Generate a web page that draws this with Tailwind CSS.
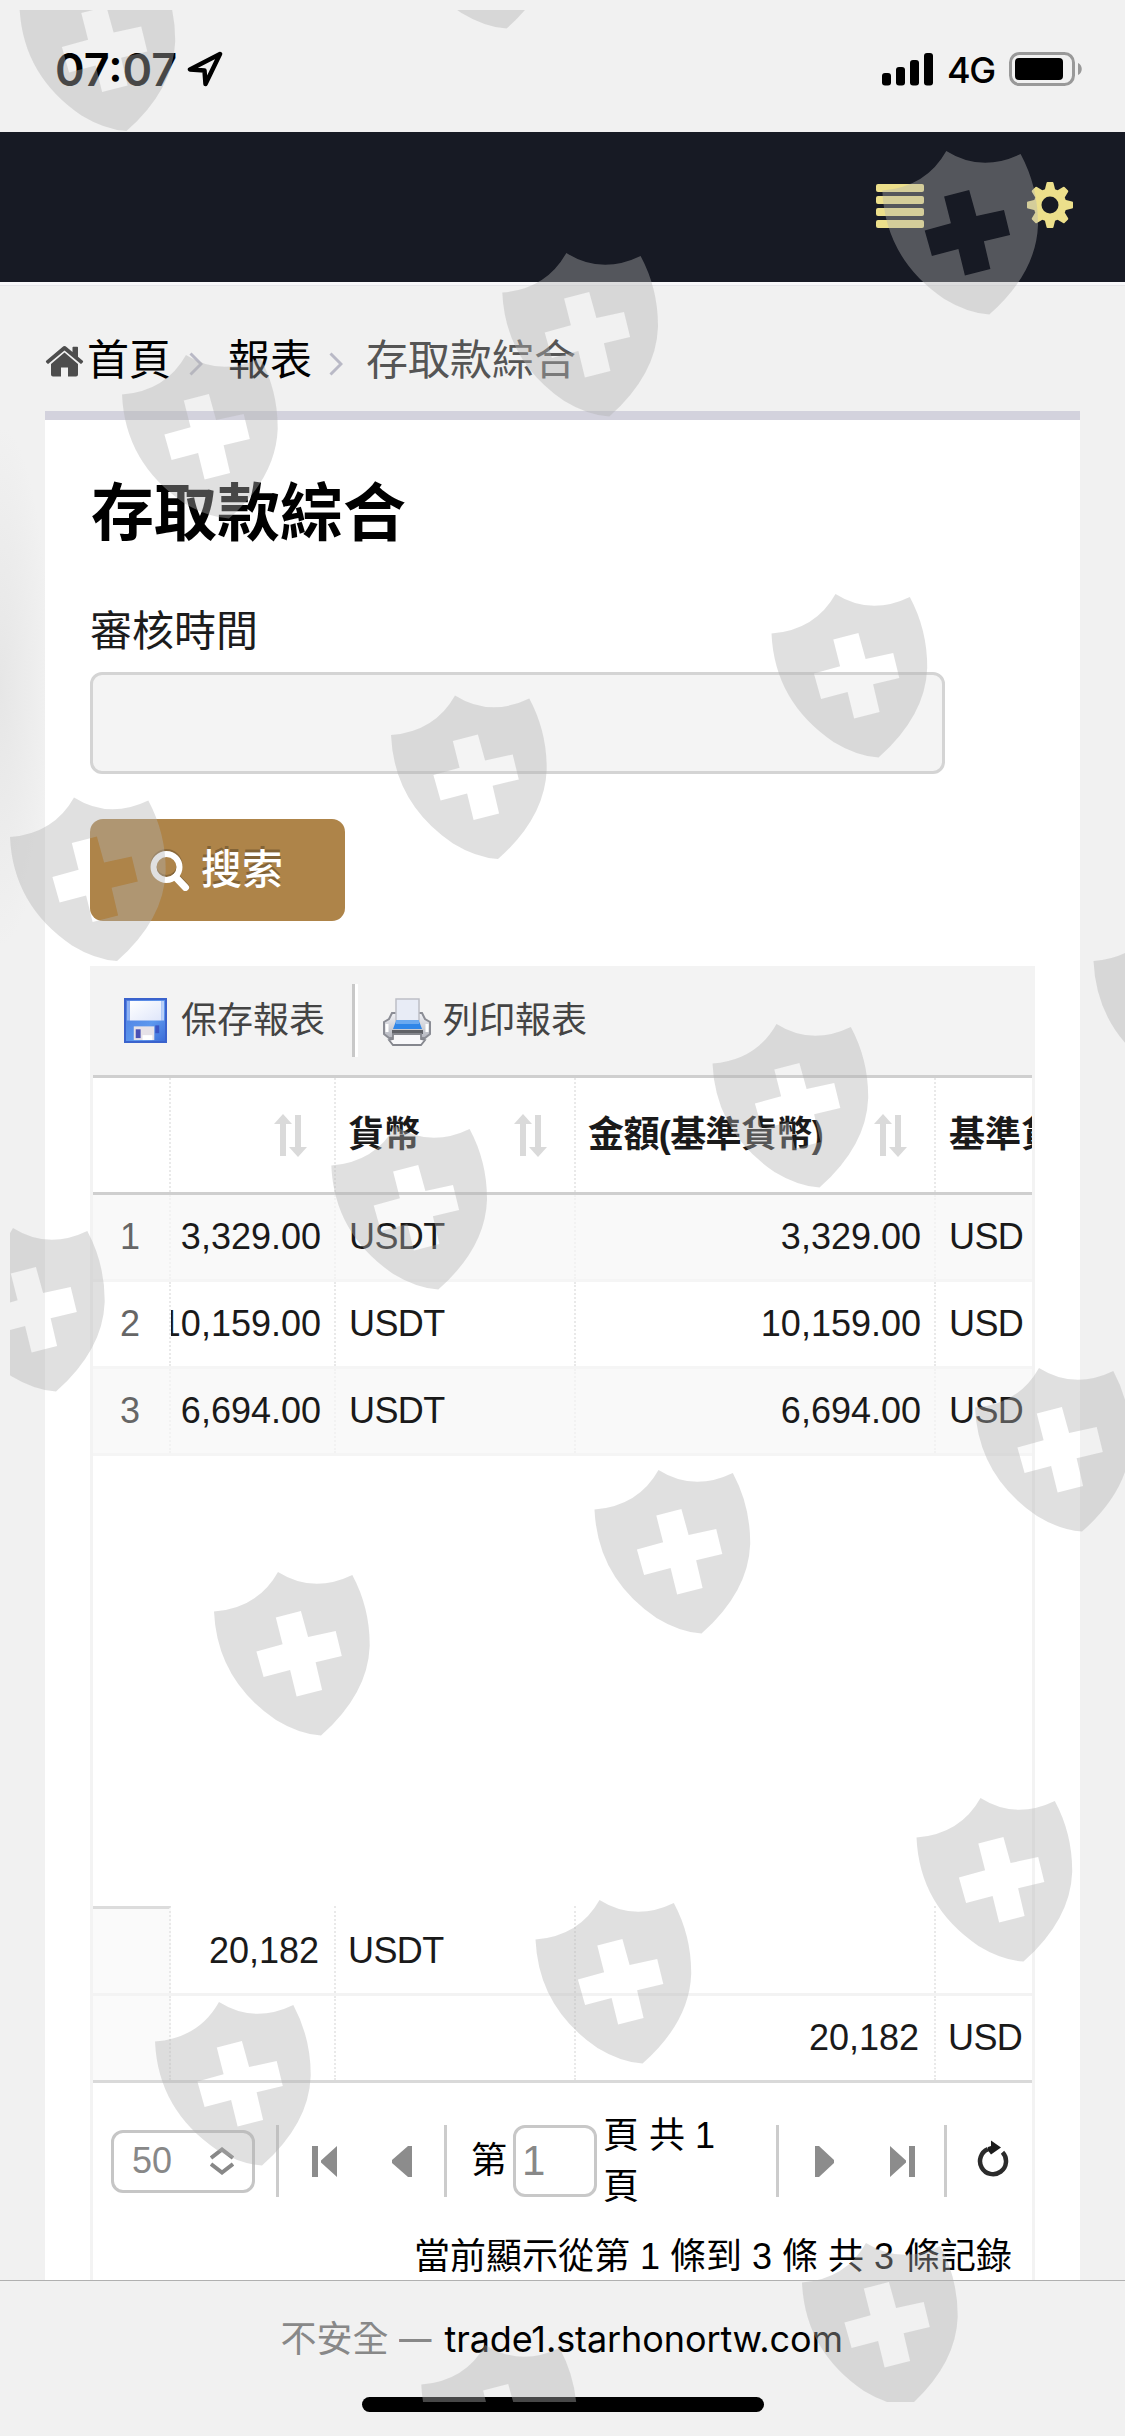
<!DOCTYPE html>
<html lang="zh-Hant">
<head>
<meta charset="utf-8">
<title>存取款綜合</title>
<script src="https://cdn.jsdelivr.net/npm/@tailwindcss/browser@4"></script>
</head>
<body class="relative flex h-[2436px] w-[1125px] flex-col overflow-hidden bg-[#f1f1f1] font-['Liberation_Sans','Noto_Sans_CJK_TC',sans-serif] text-black">

<!-- status bar -->
<header class="flex h-[132px] shrink-0 items-center justify-between pt-[6px] pr-[43px] pl-[55px]">
  <div class="flex items-center gap-3">
    <span class="w-[120px] font-['Inter',sans-serif] text-[45px] leading-none font-semibold whitespace-nowrap">07:07</span>
    <svg class="h-[36px] w-[36px]" viewBox="0 0 36 36" fill="none" stroke="#000" stroke-width="4.500" stroke-linejoin="round"><path d="M33 3 L3 18.500 L17.500 19.500 L18.500 33 Z"/></svg>
  </div>
  <div class="flex items-center gap-[13px]">
    <svg class="h-[33px] w-[52px]" viewBox="0 0 52 33"><rect x="0" y="20" width="9" height="12.500" rx="3"/><rect x="14" y="14" width="9" height="18.500" rx="3"/><rect x="28" y="7" width="9" height="25.500" rx="3"/><rect x="42" y="0" width="9" height="32.500" rx="3"/></svg>
    <span class="w-[49px] pt-[2px] font-['Inter',sans-serif] text-[36px] leading-none font-medium tracking-[-1.500px]">4G</span>
    <svg class="h-[34px] w-[73px]" viewBox="0 0 73 34"><rect x="1.500" y="1.500" width="63" height="31" rx="9" fill="none" stroke="#999" stroke-width="3"/><rect x="6" y="6" width="48" height="22" rx="4"/><path d="M69 11c5 2 5 10 0 12z" fill="#999"/></svg>
  </div>
</header>

<!-- site header -->
<nav class="flex h-[150px] shrink-0 items-center justify-end gap-[103px] bg-[#171a24] pr-[52px] pb-[4px]">
  <svg class="mt-[2px] h-[44px] w-[48px]" viewBox="0 0 48 44" fill="#ecdf8b"><rect width="48" height="8" rx="2"/><rect y="12" width="48" height="8" rx="2"/><rect y="24" width="48" height="8" rx="2"/><rect y="36" width="48" height="8" rx="2"/></svg>
  <svg class="h-[46px] w-[46px]" viewBox="-23 -23 46 46"><g fill="#ecdf8b"><circle r="16.500"/><g id="teeth"><path id="tooth" d="M-5.500 -14 L-3.500 -22 Q-3.300 -23 -2.500 -23 L2.500 -23 Q3.300 -23 3.500 -22 L5.500 -14 Z"/><use href="#tooth" transform="rotate(45)"/><use href="#tooth" transform="rotate(90)"/><use href="#tooth" transform="rotate(135)"/></g><use href="#teeth" transform="rotate(180)"/></g><circle r="8.500" fill="#171a24"/></svg>
</nav>
<div class="h-1 shrink-0 border-b border-[#e6e6ea] bg-[#f8f8fa]"></div>

<main class="flex h-[1994px] shrink-0 flex-col overflow-hidden bg-[radial-gradient(ellipse_50px_260px_at_0px_400px,#e6e6e6,#f1f1f1)] px-[45px]">
  <!-- breadcrumb -->
  <div class="flex h-[125px] shrink-0 items-center pt-[25px] text-[42px] leading-none">
    <svg class="mr-[3px] h-[31px] w-[39px]" viewBox="0 0 39 31" fill="#4d4d4d"><path d="M19.500 6.500 L33 18 V28.500 Q33 30.500 31 30.500 H23 V21.500 H16 V30.500 H8 Q6 30.500 6 28.500 V18 Z"/><path d="M19.500 0 Q20.500 0 21.500 1 L27.500 6 V1.500 Q27.500 .8 28.200 .8 H32.300 Q33 .8 33 1.500 V10.700 L37.800 14.800 Q38.500 15.400 37.900 16.200 L36.700 17.500 Q36 18.200 35.300 17.600 L19.500 4.400 L3.700 17.600 Q3 18.200 2.300 17.500 L1.100 16.200 Q.5 15.400 1.200 14.800 L17.500 1 Q18.500 0 19.500 0Z"/></svg>
    <span class="w-[102px]">首頁</span>
    <svg class="mt-[5px] h-[24px] w-[14px]" viewBox="0 0 14 24" fill="none" stroke="#b9b9c6" stroke-width="3"><path d="M1.500 1.500 L12 12 L1.500 22.500"/></svg>
    <span class="ml-[25px] w-[101px]">報表</span>
    <svg class="mt-[5px] h-[24px] w-[14px]" viewBox="0 0 14 24" fill="none" stroke="#b9b9c6" stroke-width="3"><path d="M1.500 1.500 L12 12 L1.500 22.500"/></svg>
    <span class="ml-[23px] text-[#555]">存取款綜合</span>
  </div>

  <section class="flex shrink-0 flex-col border-t-[9px] border-[#d3d2dd] bg-white px-[45px]">
    <h1 class="mt-[61px] pl-px text-[63px] leading-[64px] font-bold">存取款綜合</h1>
    <label class="mt-[66px] h-[42px] text-[42px] leading-[42px] text-[#1c1c1c]">審核時間</label>
    <div class="mt-[19px] h-[102px] w-[855px] rounded-[12px] border-[3px] border-[#d4d4d4] bg-[#f4f4f4]"></div>
    <button class="mt-[45px] flex h-[102px] w-[255px] items-center rounded-[13px] bg-[#ae8449] pl-[60px] text-[41px] leading-none font-medium text-white [text-shadow:0_-3px_0_rgba(0,0,0,0.25)]">
      <svg class="mr-[11px] h-[42px] w-[40px]" viewBox="0 0 40 42" fill="none" stroke-width="6"><g stroke="#000" stroke-opacity=".2" transform="translate(0 -2)"><circle cx="16.500" cy="18" r="13"/><path d="M25.500 28 L36 39" stroke-linecap="round"/></g><g stroke="#fff"><circle cx="16.500" cy="18" r="13"/><path d="M25.500 28 L35.500 38.500" stroke-linecap="round" stroke-width="7"/></g></svg>
      <span>搜索</span>
    </button>

    <!-- report grid -->
    <div class="mt-[45px] w-[945px] border-x-[3px] border-[#f3f3f3] text-[36px] leading-none text-[#1a1a1a]">
      <div class="flex h-[112px] items-center border-b-[3px] border-[#cfcfcf] bg-[#f3f3f3] pl-[31px] text-[#444]">
        <svg class="h-[45px] w-[43px]" viewBox="0 0 44 46">
          <defs><linearGradient id="fd" x1="0" y1="0" x2="1" y2="1"><stop offset="0" stop-color="#4b78dd"/><stop offset=".6" stop-color="#5c98ee"/><stop offset="1" stop-color="#3867d4"/></linearGradient><linearGradient id="fl" x1="0" y1="0" x2="1" y2="1"><stop offset="0" stop-color="#fff"/><stop offset="1" stop-color="#dfe6fa"/></linearGradient></defs>
          <rect width="44" height="46" fill="url(#fd)"/><rect x="1" y="1" width="42" height="44" fill="none" stroke="#3a62cc" stroke-width="2"/><rect x="6" y="3" width="32" height="20" fill="url(#fl)"/><rect x="38" y="3" width="3" height="20" fill="#b9d0f8"/><rect x="3" y="3" width="3" height="20" fill="#8fb2f3"/><rect x="10" y="29" width="21" height="14" fill="#e6e2e8"/><rect x="12" y="32" width="5" height="9" fill="#4a50b4"/><rect x="32" y="28" width="4" height="8" fill="#3a55c4"/><rect x="19" y="38" width="10" height="5" fill="#fff"/>
        </svg>
        <span class="ml-[14px] w-[171px]">保存報表</span>
        <i class="h-[73px] w-[6px] border-x-[3px] border-l-[#c8c8c8] border-r-white"></i>
        <svg class="mt-[2px] ml-[25px] h-[48px] w-[48px]" viewBox="0 0 48 48">
          <defs><linearGradient id="pb" x1="0" y1="0" x2="0" y2="1"><stop offset="0" stop-color="#f2f3f7"/><stop offset="1" stop-color="#b4b6be"/></linearGradient></defs>
          <path d="M9 15 H39 L42 21 L47 24 V36 L42 40 H6 L1 36 V24 L6 21 Z" fill="url(#pb)" stroke="#8b8d95" stroke-width="2"/>
          <path d="M13 1 H36 V23 H13 Z" fill="#e8ecf6" stroke="#bdbfc6" stroke-width="1.500"/><path d="M13 23 H36 L39 31 H10 Z" fill="#2f86e8"/><path d="M13 22 H36 V26 H13Z" fill="#6aa9f0"/>
          <path d="M4 26v8M44 26v8" stroke="#fff" stroke-width="3"/>
          <rect x="9" y="32" width="31" height="4" fill="#606268"/><path d="M10 36 H38 V41 L42 42 L38 47 H10 L6 42 L10 41 Z" fill="#f8f8fa" stroke="#85878e" stroke-width="1.800"/>
        </svg>
        <span class="ml-[12px]">列印報表</span>
      </div>

      <!-- column titles -->
      <div class="grid h-[117px] grid-cols-[78px_165px_240px_360px_96px] overflow-hidden border-b-[3px] border-[#cfcfcf] font-bold">
        <div class="border-r-[2px] border-dotted border-[#e9e9e9]"></div>
        <div class="flex items-center justify-end border-r-[2px] border-dotted border-[#e9e9e9] pr-[27px]">
          <svg class="h-[43px] w-[33px]" viewBox="0 0 33 43" fill="#dadada"><path id="sort" d="M0 10 L9 0 L18 10 H12 V42 H6 V10Z M21 1 H27 V33 H33 L24 43 L15 33 H21Z"/></svg>
        </div>
        <div class="flex items-center justify-between border-r-[2px] border-dotted border-[#e9e9e9] pr-[27px] pl-[12px]">
          <span>貨幣</span><svg class="h-[43px] w-[33px]" viewBox="0 0 33 43" fill="#dadada"><use href="#sort"/></svg>
        </div>
        <div class="flex items-center justify-between border-r-[2px] border-dotted border-[#e9e9e9] pr-[27px] pl-[12px]">
          <span class="tracking-[-0.600px] whitespace-nowrap">金額(基準貨幣)</span><svg class="h-[43px] w-[33px]" viewBox="0 0 33 43" fill="#dadada"><use href="#sort"/></svg>
        </div>
        <div class="flex items-center overflow-hidden pl-[13px] whitespace-nowrap">基準貨幣</div>
      </div>

      <!-- data rows -->
      <div class="h-[711px]">
        <div class="grid h-[87px] grid-cols-[78px_165px_240px_360px_96px] border-b-[3px] border-[#f5f5f5] bg-[#f9f9f9] leading-[84px]">
          <div class="border-r-[2px] border-dotted border-[#f2f2f2] pr-[2px] text-center text-[#666]">1</div>
          <div class="flex justify-end overflow-hidden border-r-[2px] border-dotted border-[#f2f2f2] pr-[13px]">3,329.00</div>
          <div class="border-r-[2px] border-dotted border-[#f2f2f2] pl-[13px] tracking-[-0.600px]">USDT</div>
          <div class="border-r-[2px] border-dotted border-[#f2f2f2] pr-[13px] text-right">3,329.00</div>
          <div class="pl-[13px] tracking-[-0.600px]">USD</div>
        </div>
        <div class="grid h-[87px] grid-cols-[78px_165px_240px_360px_96px] border-b-[3px] border-[#f5f5f5] leading-[84px]">
          <div class="border-r-[2px] border-dotted border-[#e9e9e9] pr-[2px] text-center text-[#666]">2</div>
          <div class="flex justify-end overflow-hidden border-r-[2px] border-dotted border-[#e9e9e9] pr-[13px]">10,159.00</div>
          <div class="border-r-[2px] border-dotted border-[#e9e9e9] pl-[13px] tracking-[-0.600px]">USDT</div>
          <div class="border-r-[2px] border-dotted border-[#e9e9e9] pr-[13px] text-right">10,159.00</div>
          <div class="pl-[13px] tracking-[-0.600px]">USD</div>
        </div>
        <div class="grid h-[87px] grid-cols-[78px_165px_240px_360px_96px] border-b-[3px] border-[#f5f5f5] bg-[#f9f9f9] leading-[84px]">
          <div class="border-r-[2px] border-dotted border-[#f2f2f2] pr-[2px] text-center text-[#666]">3</div>
          <div class="flex justify-end overflow-hidden border-r-[2px] border-dotted border-[#f2f2f2] pr-[13px]">6,694.00</div>
          <div class="border-r-[2px] border-dotted border-[#f2f2f2] pl-[13px] tracking-[-0.600px]">USDT</div>
          <div class="border-r-[2px] border-dotted border-[#f2f2f2] pr-[13px] text-right">6,694.00</div>
          <div class="pl-[13px] tracking-[-0.600px]">USD</div>
        </div>
      </div>

      <!-- totals -->
      <div class="grid h-[90px] grid-cols-[78px_165px_240px_360px_96px] border-b-[3px] border-[#f3f3f3] leading-[84px]">
        <div class="border-t-[3px] border-r-[2px] border-t-[#dcdcdc] border-r-[#e9e9e9] bg-[#fafafa] [border-right-style:dotted]"></div>
        <div class="border-r-[2px] border-dotted border-[#e9e9e9] pt-[3px] pr-[15px] text-right">20,182</div>
        <div class="border-r-[2px] border-dotted border-[#e9e9e9] pt-[3px] pl-[12px] tracking-[-0.600px]">USDT</div>
        <div class="border-r-[2px] border-dotted border-[#e9e9e9]"></div>
        <div></div>
      </div>
      <div class="grid h-[87px] grid-cols-[78px_165px_240px_360px_96px] border-b-[3px] border-[#d9d9d9] leading-[84px]">
        <div class="border-r-[2px] border-dotted border-[#e9e9e9] bg-[#fafafa]"></div>
        <div class="border-r-[2px] border-dotted border-[#e9e9e9]"></div>
        <div class="border-r-[2px] border-dotted border-[#e9e9e9]"></div>
        <div class="border-r-[2px] border-dotted border-[#e9e9e9] pr-[15px] text-right">20,182</div>
        <div class="pl-[12px] tracking-[-0.600px]">USD</div>
      </div>

      <!-- pager -->
      <div class="flex h-[156px] items-center pl-[18px] text-black">
        <div class="flex h-[63px] w-[144px] items-center justify-between rounded-[12px] border-[3px] border-[#c6c6c6] pr-[18px] pl-[18px] text-[#888]">
          <span>50</span>
          <svg class="h-[28px] w-[24px]" viewBox="0 0 24 28" fill="none" stroke="#888" stroke-width="4"><path d="M1 11 L12 2.500 L23 11 M1 17 L12 25.500 L23 17"/></svg>
        </div>
        <i class="ml-[21px] h-[72px] w-[3px] bg-[#ccc]"></i>
        <svg class="ml-[33px] h-[31px] w-[25px]" viewBox="0 0 25 31" fill="#8c8c8c"><path d="M0 0H6V31H0Z M25 0V31L9 16.500V14.500Z"/></svg>
        <svg class="ml-[55px] h-[31px] w-[20px]" viewBox="0 0 20 31" fill="#8c8c8c"><path d="M20 0V31H16L0 17V14L16 0Z"/></svg>
        <i class="ml-[32px] h-[72px] w-[3px] bg-[#ccc]"></i>
        <span class="ml-[24px]">第</span>
        <div class="ml-[6px] flex h-[72px] w-[84px] items-center rounded-[12px] border-[3px] border-[#c8c8c8] pl-[6px] text-[42px] text-[#888]">1</div>
        <div class="ml-[6px] w-[173px] pr-[50px] leading-[51px]">頁 共 1 頁</div>
        <i class="h-[72px] w-[3px] bg-[#ccc]"></i>
        <svg class="ml-[36px] h-[31px] w-[19px]" viewBox="0 0 19 31" fill="#8c8c8c"><path d="M0 0V31H4L19 17V14L4 0Z"/></svg>
        <svg class="ml-[56px] h-[31px] w-[25px]" viewBox="0 0 25 31" fill="#8c8c8c"><path d="M19 0H25V31H19Z M0 0V31L16 16.500V14.500Z"/></svg>
        <i class="ml-[29px] h-[72px] w-[3px] bg-[#ccc]"></i>
        <svg class="mb-1 ml-[30px] h-[38px] w-[32px]" viewBox="0 0 32 38"><path d="M11 9.200 A13 13 0 1 0 25.500 12.300" fill="none" stroke="#2b2b2b" stroke-width="4.500"/><path d="M14 0.500 L24 7.500 L14 14.500 L11 10.500 L11 7 L14 6Z" fill="#1c1c1c"/></svg>
      </div>
      <div class="flex h-[61px] justify-end pr-[20px] leading-[36px] whitespace-nowrap text-black">當前顯示從第 1 條到 3 條 共 3 條記錄</div>
    </div>
  </section>
</main>

<!-- browser address bar -->
<footer class="flex h-[156px] shrink-0 flex-col items-center justify-between border-t border-[#b0b0b0] bg-[#f1f1f1] pt-[38px] pb-[24px]">
  <div class="flex items-center font-['Inter','Noto_Sans_CJK_TC',sans-serif] text-[36px] leading-[40px] whitespace-nowrap">
    <span class="w-[164px] text-[#888]">不安全 <span class="inline-block w-[30px] origin-left scale-x-90">—</span></span><span class="w-[400px] tracking-[-0.100px]">trade1.starhonortw.com</span>
  </div>
  <div class="h-[15px] w-[402px] rounded-full bg-black"></div>
</footer>

<!-- shield watermark -->
<svg class="pointer-events-none absolute inset-0 h-[2436px] w-[1125px]" viewBox="0 0 1125 2436">
  <defs>
    <path id="shield" fill-rule="evenodd" d="M0 39.600 Q44 36 64 0 Q99 22 138.300 3 Q156 36 155.700 74 Q154 122 107 163.600 Q85 162 62 148 Q3 108 0 39.600 Z M61.800 45.600 L86.900 39 L94.100 65 L121.700 59 L127.800 84 L101.600 90.300 L108.100 118 L82.600 124.600 L76.100 98 L49.600 105 L42.400 79.600 L68.600 72.300 Z"/>
    <clipPath id="area"><rect x="10" y="10" width="1115" height="2392"/></clipPath>
  </defs>
  <g fill="#b2b2b2" fill-opacity=".4" clip-path="url(#area)">
    <use href="#shield" x="19.500" y="-32.500"/><use href="#shield" x="399.500" y="-135"/>
    <use href="#shield" x="882.300" y="151"/><use href="#shield" x="502.300" y="253"/><use href="#shield" x="122" y="355"/>
    <use href="#shield" x="771.500" y="594"/><use href="#shield" x="391" y="695.500"/><use href="#shield" x="10" y="797.500"/>
    <use href="#shield" x="1093.500" y="921.500"/><use href="#shield" x="712.500" y="1024"/><use href="#shield" x="331.300" y="1126"/><use href="#shield" x="-51" y="1228"/>
    <use href="#shield" x="975" y="1368"/><use href="#shield" x="594.500" y="1470"/><use href="#shield" x="214" y="1572"/>
    <use href="#shield" x="916.500" y="1798"/><use href="#shield" x="535.500" y="1900"/><use href="#shield" x="155" y="2002"/>
    <use href="#shield" x="802" y="2243"/><use href="#shield" x="421.300" y="2345"/>
  </g>
</svg>
</body>
</html>
